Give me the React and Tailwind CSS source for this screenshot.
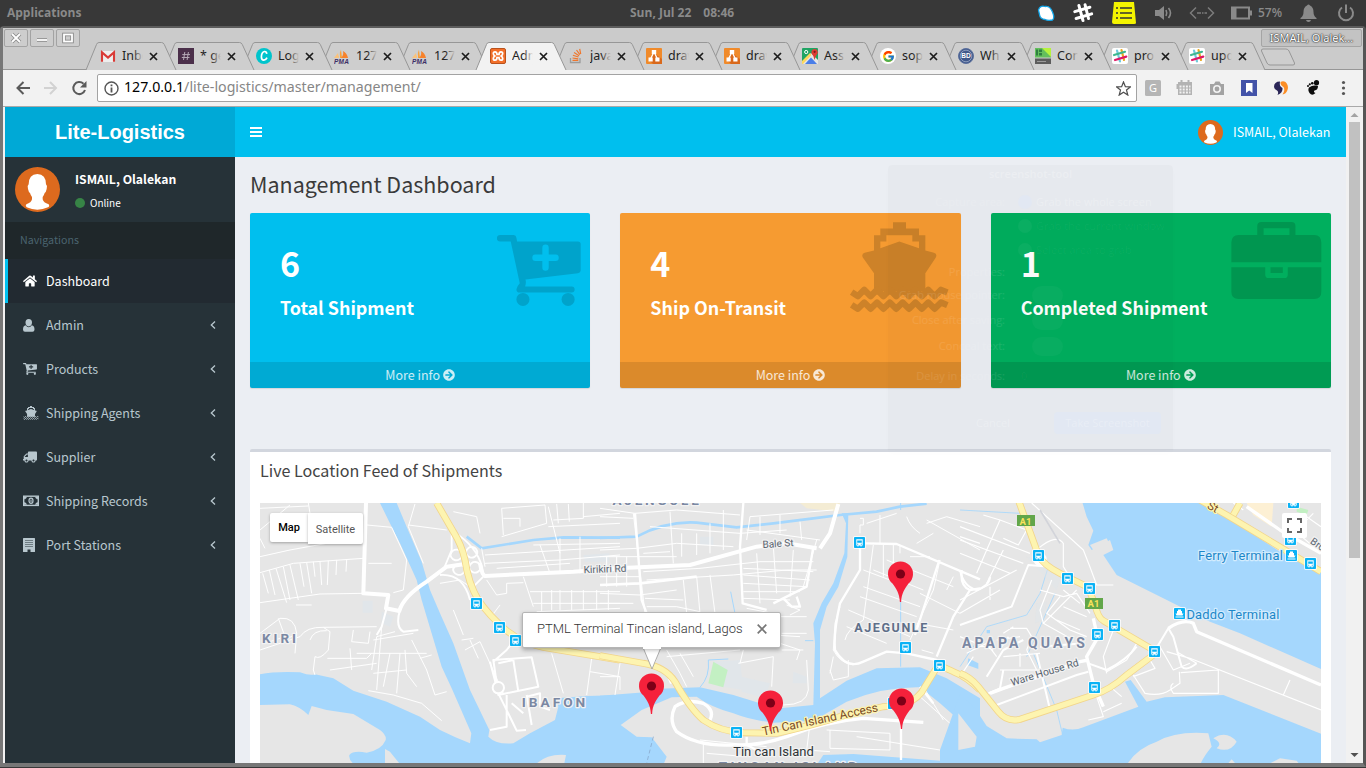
import React from "react";
import { FaTruck, FaArrowCircleRight, FaHome } from "react-icons/fa";
import { FcGoogle } from "react-icons/fc";

const Slack = ({ mono }) => (
  <svg viewBox="0 0 16 16" className="size-full">
    {!mono && <rect width="16" height="16" rx="2" fill="#fff" />}
    <g strokeWidth="2.2" strokeLinecap="round" fill="none">
      <path d="M5 2.5 L8 13.5" stroke={mono ? "#fff" : "#70cadb"} />
      <path d="M9.5 2 L12 12" stroke={mono ? "#fff" : "#e9a820"} />
      <path d="M2 7 L13 3.8" stroke={mono ? "#fff" : "#3eb890"} />
      <path d="M3 12 L14.3 8.6" stroke={mono ? "#fff" : "#e01765"} />
    </g>
  </svg>
);

const Pma = () => (
  <svg viewBox="0 0 16 16" className="size-full">
    <path d="M6 1 Q7 6 3 10 H6Z M7 2 L8 10 H4 Z" fill="#f9a13a" />
    <path d="M9 3 Q13 5 14 10 H7 Q10 7 9 3Z" fill="#f7822b" />
    <path d="M0 10 L4 5 L5 10Z" fill="#fbc27a" />
    <text x="0" y="16" fontSize="6.5" fontWeight="bold" fontStyle="italic" textLength="15" fontFamily="Liberation Sans" fill="#3d2f66">PMA</text>
  </svg>
);

const Draw = () => (
  <svg viewBox="0 0 16 16" className="size-full">
    <rect width="16" height="16" rx="1" fill="#f08a2a" />
    <path d="M8 5 L16 11 V16 H7 L4 13Z" fill="#d9691c" />
    <path d="M8 4 L4.5 11 M8 4 L11.5 11" stroke="#fff" strokeWidth="1.3" />
    <path d="M5.8 2h4.4v4H5.8z M2.5 9.5h4.2v4H2.5z M9.3 9.5h4.2v4H9.3z" fill="#fff" />
  </svg>
);

const Gmail = () => (
  <svg viewBox="0 0 16 16" className="size-full">
    <rect x="1" y="3" width="14" height="11" fill="#eee" />
    <path d="M2 13.8 V4.4 L8 9.6 L14 4.4 V13.8" fill="none" stroke="#d93a36" strokeWidth="2.1" />
  </svg>
);

const Hash = () => (
  <svg viewBox="0 0 16 16" className="size-full">
    <rect width="16" height="16" fill="#4b2f4a" />
    <path d="M6.8 4 L5.5 12 M10.4 4 L9.1 12 M4.3 6.6 H12 M3.8 9.5 H11.5" stroke="#b5a8b5" strokeWidth="1" />
  </svg>
);

const Canva = () => (
  <svg viewBox="0 0 16 16" className="size-full">
    <circle cx="8" cy="8" r="8" fill="#00c4cc" />
    <path d="M10.8 5.8 Q10.5 3.3 8.4 3.5 Q5.5 4.2 5.4 9 Q5.5 12 7.8 12.2 Q10 12 11 9.6" fill="none" stroke="#fff" strokeWidth="1.7" />
  </svg>
);

const Xampp = () => (
  <svg viewBox="0 0 16 16" className="size-full">
    <rect x=".5" y=".5" width="15" height="15" rx="1.5" fill="#f3702a" stroke="#b9521d" />
    <path d="M5 3.800 Q3.300 3.800 3.300 5.600 Q3.300 7 4.800 8 Q3.300 9 3.300 10.400 Q3.300 12.200 5 12.200 Q7 12.200 7 9.500 H9 Q9 12.200 11 12.200 Q12.700 12.200 12.700 10.400 Q12.700 9 11.200 8 Q12.700 7 12.700 5.600 Q12.700 3.800 11 3.800 Q9 3.800 9 6.500 H7 Q7 3.800 5 3.800Z" fill="none" stroke="#fff" strokeWidth="1.700" />
  </svg>
);

const Maps = () => (
  <svg viewBox="0 0 16 16" className="size-full">
    <rect width="16" height="16" rx="1" fill="#1fa463" />
    <path d="M0 14 L9 5 L16 12 V16 H0Z" fill="#e6e6e6" />
    <path d="M3 16 L9 9.5 L15 16Z" fill="#4a7ee8" />
    <path d="M0 13 L8 5 L9.5 7 L1 16 H0Z" fill="#fdd75b" />
    <circle cx="4.2" cy="4" r="1.6" fill="none" stroke="#fff" />
    <path d="M12.6 12 Q12 8 9.6 5.5 A3.2 3.4 0 1 1 15.6 5.5 Q13.2 8 12.6 12Z" fill="#de3b35" />
    <circle cx="12.6" cy="3.8" r="1.1" fill="#7d1a17" />
  </svg>
);

const Goog = () => (
  <div className="flex size-full items-center justify-center rounded-full bg-white"><FcGoogle size={13} /></div>
);

const Bd = () => (
  <svg viewBox="0 0 16 16" className="size-full">
    <circle cx="8" cy="8" r="7.5" fill="#41598b" stroke="#5a6f9d" />
    <circle cx="8" cy="8" r="5.8" fill="none" stroke="#a9b6d0" strokeWidth=".7" />
    <text x="8" y="10.4" fontSize="6.5" textAnchor="middle" fontWeight="bold" fontFamily="Liberation Sans" fill="#fff">BD</text>
  </svg>
);

const Green = () => (
  <svg viewBox="0 0 16 16" className="size-full">
    <rect width="16" height="9.5" fill="#63bf5c" />
    <path d="M7 0 H16 V9 Z" fill="#b6f23e" />
    <path d="M1 1.500 h2 v6 h-2z M4 1.500 h3 v2.500 h-3z M4 5 h3 v2.500 h-3z" fill="#2f7f41" />
    <rect y="10.5" width="16" height="5.5" fill="#5c5c5c" />
    <path d="M2 13.5 h9" stroke="#aaa" strokeWidth=".8" />
  </svg>
);

const Stack = () => (
  <svg viewBox="0 0 16 16" className="size-full" fill="none">
    <path d="M2.500 10 V14.5 H12 V10" stroke="#9b9b9b" strokeWidth="1.3" />
    <path d="M4.500 12.3 H10.3 M4.500 10 L10.3 10.8 M4.900 7.3 L10.500 9 M6.1 4.5 L11.1 7.7 M8.500 2 L11.9 6.6 M11.7 .8 L12.7 6" stroke="#f0762b" strokeWidth="1.2" />
  </svg>
);

const tabs = [
  [Gmail, "Inbo"], [Hash, "* ge"], [Canva, "Log"], [Pma, "127"], [Pma, "127"], [Xampp, "Adm"], [Stack, "java"],
  [Draw, "draw"], [Draw, "draw"], [Maps, "Ass"], [Goog, "sop"], [Bd, "Wh"], [Green, "Con"], [Slack, "pro"], [Slack, "upd"],
];

function Tab({ Icon, label, index }) {
  const active = index === 5;
  return (
    <div
      className={(index > 10 ? "w-[77px]" : "w-[78px]") + " relative flex h-7 shrink-0 items-center pl-3.5"}
      style={{ zIndex: active ? 40 : 30 - index }}
    >
      <svg className="absolute left-0 top-0 overflow-visible" width="90" height="28">
        <path
          d="M0 28 L10.5 2.5 Q11.2 .5 13 .5 H75.5 Q77.5 .5 78.3 2.5 L90 28"
          fill={active ? "#f2f2f2" : "#cecece"}
          stroke="#979797"
        />
      </svg>
      <div className="relative size-4"><Icon /></div>
      <div className="relative ml-1.5 h-5 w-[21px] overflow-hidden whitespace-nowrap text-[12.5px] leading-5 text-[#222]">
        {label}
        <div className={(active ? "to-[#f2f2f2]" : "to-[#cecece]") + " absolute inset-y-0 right-0 w-2.5 bg-linear-to-r from-transparent"} />
      </div>
      <svg className="relative ml-[6px]" width="9" height="9" viewBox="0 0 9 9">
        <path d="M1 1 L8 8 M8 1 L1 8" stroke="#1c1c1c" strokeWidth="1.7" />
      </svg>
    </div>
  );
}

function SystemBar() {
  return (
    <div className="flex h-[26px] shrink-0 items-center bg-[#383838] font-['Open_Sans',sans-serif] text-[12px] font-bold text-[#8a8a8a]">
      <div className="w-[630px] pl-[7px]">Applications</div>
      <div className="flex w-[407px] gap-3"><span>Sun, Jul 22</span><span>08:46</span></div>
      <svg width="18" height="18" viewBox="0 0 18 18"><path d="M1.5 6 Q3 1 8 2.5 Q13 1.5 15.5 8 Q18 14 15.5 16 Q11 17 8 15.5 Q3 15 2.5 10.5Z" fill="#fff" stroke="#12a5e8" strokeWidth="1.3" /></svg>
      <div className="ml-[17px] size-[22px]"><Slack mono /></div>
      <svg className="ml-[18px]" width="24" height="22" viewBox="0 0 24 22">
        <path d="M2 0 H22 L24 21 Q24 22 22 22 H2 Q0 22 0 20Z" fill="#f4f400" />
        <path d="M8 6 H20 M8 11 H20 M8 16 H20 M4 6 H6 M4 11 H6 M4 16 H6" stroke="#333" strokeWidth="1.7" />
      </svg>
      <svg className="ml-[18px]" width="20" height="18" viewBox="0 0 20 18" fill="none" stroke="#8a8a8a" strokeWidth="1.6">
        <path d="M1 6 H5 L10 2 V16 L5 12 H1Z" fill="#8a8a8a" stroke="none" />
        <path d="M12 6 Q13.500 9 12 12 M14.500 4 Q18.500 9 14.500 14" />
      </svg>
      <svg className="ml-[15px]" width="26" height="14" viewBox="0 0 26 14" fill="none" stroke="#7c7c7c" strokeWidth="1.5">
        <path d="M7 1.500 L1.500 7 L7 12.500 M19 1.500 L24.500 7 L19 12.500 M8 7 h4 M13 7 h1.500 M15.500 7 h2.500" />
      </svg>
      <svg className="ml-[16px]" width="22" height="14" viewBox="0 0 22 14">
        <path d="M1 1.5 H18 V12.5 H1Z" fill="none" stroke="#8a8a8a" strokeWidth="2" />
        <path d="M2 2 H5.500 V12 H2Z M19 4.5 h2 v5 h-2z" fill="#8a8a8a" />
      </svg>
      <span className="ml-[5px] w-[28px] font-semibold">57%</span>
      <svg className="ml-[14px]" width="17" height="18" viewBox="0 0 17 18" fill="#8a8a8a">
        <path d="M7 1.5 Q8.5 -.5 10 1.5 Q13.5 3 13.5 8 Q13.5 12 16.5 14 V15 H.5 V14 Q3.5 12 3.5 8 Q3.5 3 7 1.5Z M6 16 H11 Q10.5 18 8.5 18 Q6.500 18 6 16Z" />
      </svg>
      <svg className="ml-[20px]" width="18" height="18" viewBox="0 0 18 18" fill="none" stroke="#8a8a8a" strokeWidth="2">
        <path d="M5 3.5 A7 7 0 1 0 13 3.500 M9 .5 V9" />
      </svg>
    </div>
  );
}

const WinButton = ({ children }) => (
  <div className="flex h-[18px] w-[24px] items-center justify-center rounded-xs border border-[#a3a3a3] bg-[#cdcdcd]">
    <svg width="14" height="12" viewBox="0 0 14 12" fill="none">
      <g stroke="#8c8c8c" strokeWidth="3.600">{children}</g>
      <g stroke="#fff" strokeWidth="1.800">{children}</g>
    </svg>
  </div>
);

function TabStrip() {
  return (
    <div className="flex h-[42px] shrink-0 items-start border-b border-[#979797] bg-[#cbcbcb]">
      <div className="flex w-[83px] shrink-0 gap-[2px] pl-[1px] pt-[1px]">
        <WinButton><path d="M3 2 L11 10 M11 2 L3 10" /></WinButton>
        <WinButton><path d="M2 8 H12" /></WinButton>
        <WinButton><rect x="3" y="2.500" width="8" height="7" /></WinButton>
      </div>
      <div className="mt-[14px] flex">
        {tabs.map(([Icon, label], i) => <Tab key={i} Icon={Icon} label={label} index={i} />)}
      </div>
      <div className="relative -ml-1 flex w-[114px] shrink-0 flex-col items-end gap-[1px] pt-[1px]">
        <div className="flex h-[18px] w-[101px] items-center justify-center rounded-xs border border-[#a5a5a5] bg-[#c3c3c3] text-[11px] text-white [text-shadow:0_0_1px_#333,0_0_1px_#333,0_0_2px_#333]">
          ISMAIL, Olalek...
        </div>
        <svg className="mr-[66px]" width="36" height="18" viewBox="0 0 36 18"><path d="M1.500 3 Q1 1 3 1 H26 Q28 1 29 3 L34.500 15 Q35 17 33 17 H10 Q8 17 7 15Z" fill="#cecece" stroke="#979797" /></svg>
      </div>
    </div>
  );
}

function Toolbar() {
  return (
    <div className="flex h-[37px] shrink-0 items-center border-b border-[#a9a9a9] bg-[#f2f2f2]">
      <svg className="ml-[12px]" width="72" height="18" viewBox="0 0 72 18" fill="none" strokeWidth="2">
        <path d="M15 9 H2.500 M8.500 3 L2.500 9 L8.500 15" stroke="#5a5a5a" />
        <path d="M29 9 H41 M35 3 L41 9 L35 15" stroke="#d2d2d2" />
        <path d="M70 11 A6 6 0 1 1 68.500 4.800" stroke="#5a5a5a" />
        <path d="M71.500 2 V8.500 H65Z" fill="#5a5a5a" />
      </svg>
      <div className="ml-[10px] flex h-7 w-[1040px] items-center rounded-xs border border-[#a3a3a3] bg-white">
        <svg className="ml-[6px]" width="15" height="15" viewBox="0 0 15 15"><circle cx="7.500" cy="7.500" r="6.500" fill="none" stroke="#555" strokeWidth="1.400" /><path d="M7.500 3.500 v1.800 M7.500 6.500 v5" stroke="#555" strokeWidth="1.800" /></svg>
        <span className="ml-[5px] flex-1 -mt-0.5 text-[14.200px] text-[#868686]"><span className="text-black">127.0.0.1</span>/lite-logistics/master/management/</span>
        <svg className="mr-[5px]" width="15" height="15" viewBox="0 0 16 16"><path d="M8 1 L10 6 L15.300 6.300 L11.200 9.700 L12.600 15 L8 12 L3.400 15 L4.800 9.700 L.7 6.300 L6 6Z" fill="none" stroke="#4e4e4e" strokeWidth="1.300" /></svg>
      </div>
      <svg className="ml-[7px]" width="204" height="20" viewBox="0 0 204 20">
        <rect x="1" y="2" width="16" height="16" rx="1.500" fill="#b5b5b5" />
        <text x="9" y="14" fontSize="11" textAnchor="middle" fontFamily="Noto Sans" fill="#fff">G</text>
        <path d="M34 4 H48 V17 H34Z M32.500 6h2v5h-2z" fill="#b3b3b3" />
        <g fill="#b3b3b3"><path d="M36.500 2h2v3h-2z M43.500 2h2v3h-2z" /></g>
        <path d="M35.500 8.500 H46.500 M35.500 11.500 H46.500 M35.500 14.500 H46.500" stroke="#f2f2f2" strokeWidth="2" strokeDasharray="2 1.200" />
        <path d="M66 6 H70 L71.500 3.500 H75.500 L77 6 H80 V17 H66Z" fill="#a3a3a3" /><circle cx="73" cy="11" r="3.200" fill="#a3a3a3" stroke="#f2f2f2" strokeWidth="1.600" />
        <rect x="97" y="2" width="16" height="16" fill="#4353a8" /><path d="M102 5 H108.500 V15 L105.200 12.500 L102 15Z" fill="#fff" />
        <path d="M136 3.500 Q130 3.500 130 9 Q130.500 12 133 12.500 Q135 14 133.500 17 Q139 15 138.500 10 Q135 8.500 136 3.500Z" fill="#2b2657" />
        <path d="M136.500 4 Q139 2.500 141.500 4 Q145 7.500 143.500 12 Q142 16 138.500 16.500 Q141.500 12 139.500 9 Q136 7 136.500 4Z" fill="#fb8d25" />
        <path d="M165 9.500 Q169 6.500 174 8 Q174 12 170.500 12.500 Q169 14 171.500 15 Q168 18.500 165.500 15 Q163.500 12 165 9.500Z" fill="#0d0d0d" />
        <g fill="#0d0d0d"><ellipse cx="172.500" cy="4.700" rx="2.600" ry="2.700" /><circle cx="168.300" cy="5.200" r="1.300" /><circle cx="165.800" cy="6.300" r="1.100" /><circle cx="164" cy="8" r="1" /></g>
        <g fill="#555"><circle cx="199.500" cy="4.500" r="1.600" /><circle cx="199.500" cy="10" r="1.600" /><circle cx="199.500" cy="15.500" r="1.600" /></g>
      </svg>
    </div>
  );
}

const Avatar = ({ className }) => (
  <svg className={className} viewBox="45 186 135 135">
    <circle cx="112.500" cy="253.500" r="67.500" fill="#dd6a1e" />
    <path d="M112 207 Q138 208 138 238 Q143 242 140 252 Q138 262 134 264 Q132 271 128 276 V283 Q130 293 146 298 Q150 304 144 307 Q128 314 112 314 Q96 314 80 307 Q75 303 79 298 Q94 293 96 283 V276 Q92 271 90 264 Q86 262 84 252 Q81 242 86 238 Q86 208 112 207Z" fill="#fff" />
  </svg>
);

const CartPlus = ({ className, plus }) => (
  <svg className={className} viewBox="80 104 251 212" fill="currentColor">
    <path d="M89 104 H130 Q137 104 138 112 L140 123 H322 Q330 123 330 131 V210 Q330 217 322 218 L165 237 Q168 245 164 258 H303 a9 9 0 0 1 0 18 H148 Q138 276 138 266 Q139 258 148 248 L121 123 H89 a9.500 9.500 0 0 1 0 -19Z" />
    <circle cx="157.500" cy="296.500" r="19.500" /><circle cx="292.500" cy="296.500" r="19.500" />
    <path d="M195 172 H255 M225 142 V201" stroke={plus} strokeWidth="19" strokeLinecap="round" />
  </svg>
);

const zig = (y) => {
  let d = "M1144 " + (y - 2);
  for (let i = 0; i < 14; i++) d += " L" + (1162.500 + i * 19.200).toFixed(1) + " " + (i % 2 ? y - 9 : y + 10);
  return d + " L1431 " + (y - 1);
};

const Ship = ({ className }) => (
  <svg className={className} viewBox="1136 65 303 272" fill="currentColor">
    <path fillRule="evenodd" d="M1268 65H1307V84H1346V104H1365V150L1391 157Q1402 161 1396 172L1365 218V272H1211V218L1178 172Q1172 160 1183 157L1211 150V104H1230V84H1268Z M1230 143L1287 123L1346 143V123H1326V104H1248V123H1230Z" />
    <path d={zig(277)} fill="none" stroke="currentColor" strokeWidth="19" strokeLinejoin="round" />
    <path d={zig(315)} fill="none" stroke="currentColor" strokeWidth="19" strokeLinejoin="round" />
  </svg>
);

const Briefcase = ({ className }) => (
  <svg className={className} viewBox="812 350 272 232" fill="currentColor">
    <path fillRule="evenodd" d="M812 471V412Q812 390 834 389H890V362Q890 350 903 350H993Q1005 350 1005 362V389H1062Q1083 390 1083 412V471Z M909 369H987V389H909Z" />
    <path d="M812 486H914V508Q914 519 924 519H972Q982 519 982 508V486H1083V560Q1083 582 1062 582H834Q812 582 812 560Z M930 486h37v18h-37z" />
  </svg>
);

const User = () => (
  <svg width="12" height="13" viewBox="0 0 12 13" fill="currentColor">
    <path d="M5.700 0 Q9 0 9 3.500 Q9 7 5.700 7.500 Q2.500 7 2.500 3.500 Q2.500 0 5.700 0Z M2.700 6.200 Q4 8.200 5.700 8.200 Q7.500 8.200 8.800 6.200 Q11.500 6.700 11.500 10.500 Q11.500 12.800 9.500 12.800 H2 Q0 12.800 0 10.500 Q0 6.700 2.700 6.200Z" />
  </svg>
);

const Money = () => (
  <svg width="16" height="12" viewBox="0 0 16 12" fill="none" stroke="currentColor">
    <rect x=".7" y="1.200" width="14.600" height="9.200" strokeWidth="1.400" />
    <path d="M1 2 H3.500 Q3.500 4 1 4Z M15 2 H12.500 Q12.500 4 15 4Z M1 9.600 H3.500 Q3.500 7.600 1 7.600Z M15 9.600 H12.500 Q12.500 7.600 15 7.600Z" fill="currentColor" strokeWidth=".5" />
    <ellipse cx="8" cy="5.800" rx="2" ry="2.700" strokeWidth="1.200" /><path d="M8 4.500 V7.500" />
  </svg>
);

const Building = () => (
  <svg width="12" height="14" viewBox="0 0 12 14">
    <rect x="0" width="12" height="14" rx=".5" fill="currentColor" />
    <path d="M2.500 2.500 h7 M2.500 4.500 h7 M2.500 6.500 h7 M2.500 8.500 h7" stroke="#263238" strokeWidth="1" strokeDasharray="1 1" /><path d="M4.500 11.500h3v2.500h-3z" fill="#263238" />
  </svg>
);

const nav = [
  ["Dashboard", <FaHome size={14} />],
  ["Admin", <User />],
  ["Products", <CartPlus className="h-3 w-3.5" plus="#263238" />],
  ["Shipping Agents", <Ship className="h-3.5 w-4" />],
  ["Supplier", <FaTruck size={14} className="-scale-x-100" />],
  ["Shipping Records", <Money />],
  ["Port Stations", <Building />],
];

function Sidebar() {
  return (
    <aside className="flex w-[230px] shrink-0 flex-col bg-[#263238] text-[#b8c7ce]">
      <div className="flex h-[50px] items-center justify-center bg-[#00a9d6] font-['Liberation_Sans',sans-serif] text-[20px] font-bold text-white">Lite-Logistics</div>
      <div className="flex h-[65px] px-2.5">
        <Avatar className="mt-2.5 size-[45px]" />
        <div className="ml-[15px] pt-[12px] text-white">
          <div className="text-[12.200px] font-bold leading-5">ISMAIL, Olalekan</div>
          <div className="mt-[6px] flex items-center text-[10px] leading-4"><span className="mr-[5px] size-2.5 rounded-full bg-[#378446]" />Online</div>
        </div>
      </div>
      <div className="flex h-[37px] items-center bg-[#1f272a] pl-[15px] text-[10.700px] text-[#4b646f]">Navigations</div>
      {nav.map(([label, icon], i) => (
        <div key={label} className={(i === 0 ? "border-[#00c0ef] bg-[#222a31] text-white" : "border-transparent") + " flex h-11 items-center border-l-3 pl-[15px] pr-[18px]"}>
          <span className="flex w-[23px] items-center">{icon}</span>
          <span className="flex-1 text-[12.500px] leading-5">{label}</span>
          {i > 0 && <svg width="8" height="10" viewBox="0 0 8 10" fill="none" stroke="currentColor" strokeWidth="1.300"><path d="M6 1.500 L2.300 5 L6 8.500" /></svg>}
        </div>
      ))}
    </aside>
  );
}

function StatCard({ bg, value, title, children }) {
  return (
    <div className={bg + " relative flex h-[175px] flex-1 flex-col rounded-xs text-white shadow-[0_1px_1px_rgba(0,0,0,0.1)]"}>
      <div className="flex-1 pl-[30px] pt-[31px] font-bold">
        <div className="text-[34px] leading-[38px]">{value}</div>
        <div className="mt-[13px] text-[17.900px] leading-6">{title}</div>
      </div>
      <div className="flex h-[26px] items-center justify-center gap-[3px] rounded-b-xs bg-black/11 text-[12.500px] text-white/80">More info <FaArrowCircleRight size={12} /></div>
      {children}
    </div>
  );
}

const buses = [[476.500, 603.500], [499.500, 627.500], [515.500, 640.500], [859.500, 542.500], [905.500, 647.500], [939.500, 665.500], [736.500, 732.500], [893.500, 703.500], [1038.500, 555.500], [1067.500, 578.500], [1089.500, 588.500], [1114.500, 625.500], [1097.500, 634.500], [1154.500, 651.500], [1094.500, 687.500], [1310.500, 563.500], [1290.500, 539.500], [1293.500, 502.500]];
const ferries = [[1291.500, 555.500], [1179.500, 613.500]];
const pins = [[900.500, 602], [651.500, 714], [770.500, 731], [901.500, 729]];

const Label = (p) => (
  <text textAnchor="middle" fontFamily="Roboto, sans-serif" stroke="#f2f2f2" strokeWidth="2.500" paintOrder="stroke" strokeLinejoin="round" {...p} />
);

const yellowA = "M590 189 L640 275 Q665 315 675 360 Q685 430 715 480 Q750 530 800 572 Q850 610 910 622 L1140 660";
const yellowB = "M0 497 L130 520 Q195 530 225 575 Q270 655 310 690 Q360 725 430 728 L530 730 Q640 705 720 680 L850 650 L910 645 Q960 625 975 590 L1015 525 L1060 545 Q1100 560 1140 600";
const yellowC = "M0 550 Q30 560 55 590 L115 665 Q140 697 180 688 L400 615 Q450 600 500 555 L580 495 M175 30 L235 195 Q250 225 300 250 L385 292 L405 345 Q415 385 430 392 L580 480 M720 30 L800 75 L1083 245 M840 39 L820 75";

const Yellow = ({ d }) => (
  <g fill="none" strokeLinejoin="round">
    <path d={d} stroke="#f2d58a" strokeWidth="21" /><path d={d} stroke="#fdf4b0" strokeWidth="16" />
  </g>
);

function ShipmentMap() {
  return (
    <div className="relative h-[260px] w-full overflow-hidden bg-[#e6e6e6]">
      <svg width="1061" height="260" viewBox="260 503 1061 260" className="block">
        <g transform="translate(240 440) scale(.33333)">
          <path fill="#a5d7fd" d="M420 189H470L500 260L545 365L570 450L600 520L640 610L690 750L748 870L745 890Q770 915 820 910L870 880L945 840L955 800L950 775L1040 768L1150 765V975H50V705Q100 693 180 697Q210 708 225 703L280 715L340 752L440 785L540 830L600 870Q640 890 690 910L694 880L635 745L605 680L560 530L545 480L530 420L480 310L445 240Z" />
          <path fill="#e6e6e6" d="M50 795L150 793Q180 800 205 825L215 798L260 810L340 822L420 870Q440 885 437 900Q425 930 380 938Q340 930 328 945Q325 960 345 975H50Z M435 927L450 935Q470 960 482 975H435Z M885 975Q920 940 978 945L972 975Z" />
          <path fill="none" stroke="#a5d7fd" strokeWidth="8" d="M680 290L725 325L880 300L970 292L1140 293" />
          <path fill="#e1e6ea" d="M368 482H398V518H368Z M425 515L460 530L450 560L425 550Z M1030 345L1108 340V365H1035Z" />
          <g fill="none" stroke="#fff" strokeLinejoin="round">
            <path strokeWidth="3" d="M60 270L150 195 M60 205L205 198 M60 350L150 330L370 290 M75 325L60 295 M205 189L210 220 M60 398L160 370L370 355 M68 400L85 460 M88 390L105 465 M108 385L140 488 M130 380L150 480 M150 375L175 480 M180 370L192 440 M200 368L215 460 M220 365L225 410 M240 365L245 435 M265 362L262 435 M290 360L288 405 M320 360L318 395 M60 488L240 462L370 460 M380 255L455 262L500 360L490 450L460 458 M385 370H455 M525 192L505 260L550 370 M505 255L620 270 M60 580L120 535Q165 530 170 580L120 610 M115 535L135 590L75 610 M168 495H215 M60 630L180 590Q200 560 250 562L410 560 M250 562L270 575L265 630Q240 660 225 650L220 690L225 705 M210 600Q220 570 260 572 M340 570L335 605L385 610L390 575 M465 575L410 590L395 690 M270 690L410 670 M262 655H380L395 640 M330 625L335 690 M350 640H560 M400 600L520 580 M425 560L410 750 M450 640L430 740 M480 640L470 760 M495 630L500 700L530 740 M515 600L560 690L585 765L620 755 M400 700L500 690 M385 752L460 765L545 790L605 842 M540 655L575 645 M170 580L165 640 M600 430L660 420L690 440 M640 510L670 585 M665 600L700 595 M690 600L715 655 M675 630L720 605L750 670L790 760 M790 285L785 205L915 195L920 250L785 290 M790 235H840V260 M925 200L960 340 M950 192L955 250 M940 240L1030 235V189 M985 192L988 245 M1030 230L1140 220 M925 260L1140 250 M880 315L1140 310 M900 315L930 400 M735 345L1140 320 M735 370L960 360L1140 345 M960 295V400 M1020 290V400 M725 325L735 380 M770 385L990 370 M740 420L770 465L800 460V430L850 428 M850 410L880 500 M870 455H1140 M880 490H1140 M890 515L1140 505 M905 455V515 M935 450V510 M960 450V510 M995 450V510 M1030 450V510 M1070 450V510 M1105 450V510 M640 215L710 230L720 280 M750 535L780 495 M935 640L970 760 M1055 655L1040 765 M1050 695L1140 710" />
            <path strokeWidth="6" d="M760 660L875 652L895 740L775 765Z M820 660L835 755 M775 670L820 660 M750 665L775 760Q800 810 830 872L858 870 M800 765L800 860L750 870 M760 665L800 630L815 610 M440 505L425 560L410 585 M480 510Q465 560 490 575L535 570 M860 765L875 855 M815 790L850 820 M860 770L900 760V800L930 810" />
            <path strokeWidth="12" d="M378 189L370 460L445 465L438 505L478 513Q490 470 560 425L620 380L690 370 M720 370Q725 405 735 408L1000 395L1140 385" />
            <path strokeWidth="5.500" d="M632 338a17 17 0 1 0 34 10a17 17 0 1 0 -34 -4 M678 330a17 17 0 1 0 34 10a17 17 0 1 0 -34 -4 M640 382a17 17 0 1 0 34 10a17 17 0 1 0 -34 -4 M688 375a17 17 0 1 0 34 10a17 17 0 1 0 -34 -4 M635 280V330L610 390 M655 285Q720 330 730 400 M600 405Q670 400 690 480 M700 440L730 410" />
          </g>
          <circle cx="775" cy="743" r="17" fill="#e6e6e6" stroke="#fff" strokeWidth="6" />
          <Yellow d={yellowA} />
        </g>
        <g transform="translate(600 490) scale(.33333)">
          <path fill="#a5d7fd" d="M0 617L155 605L180 596L300 592L400 615L480 640L540 655L640 645L645 460L640 400L665 340L700 280L733 190L738 100L725 70H745L742 200L715 290L680 350L660 420V625L740 572L830 535L960 532L1040 565L1140 625V830H0Z" />
          <path fill="#e6e6e6" d="M62 705L125 660L215 622L290 620Q330 650 400 670Q450 690 520 698L640 692L740 635Q850 590 960 592L1020 640L1100 710L1130 745V768L1080 775L1060 815L760 792L670 795L650 825H190L200 800L155 742L110 740Z" />
          <path fill="none" stroke="#a5d7fd" strokeWidth="8" d="M0 144L110 140Q200 92 290 98L410 112L520 100L640 85L720 75L830 65L900 50L980 41" />
          <path fill="none" stroke="#a5d7fd" strokeWidth="3" d="M902 39V60 M902 330V530 M392 305L405 370 M300 592Q330 560 325 510L385 507 M615 452H640" />
          <path fill="#e1e6ea" d="M340 515L420 510L430 600L370 590Z M425 560L510 580L495 625L425 605Z M580 545L620 560V580H578Z M300 140H340V165H300Z" />
          <path fill="#c3f0c3" d="M340 515L383 540L370 592L325 580Z" />
          <path fill="#fdf0c8" d="M600 39L720 39L715 65L620 55Z" opacity=".6" />
          <g fill="none" stroke="#fff" strokeLinejoin="round">
            <path strokeWidth="3" d="M0 55L105 70L230 60L420 75 M0 80L100 85 M100 70L135 370 M0 180L110 175L230 160L400 170 M130 190L210 185 M150 110L420 130L560 120 M0 200H230 M210 65L220 220 M245 130V200 M290 130V195 M330 100V190 M370 60V180 M0 310L120 315L230 300 M20 200V290 M50 200V290 M80 200V290 M0 260H120 M130 245L300 235L480 215L640 215 M140 270L400 255L560 240L650 240 M135 325L250 330 M140 350H230L300 365 M430 235L640 245 M430 255L630 270 M430 280L620 290 M430 305H600 M430 325L570 330 M470 190L480 340 M520 170L530 310 M580 180L570 320 M440 150L450 80L700 60 M480 80V135 M540 75V130 M600 95L605 150 M250 270L260 370 M290 260L300 370 M330 255L345 370 M440 120L660 150 M440 355L520 370 M560 345L600 360L570 375 M650 150L610 290 M530 380H620 M545 430H620 M540 460L600 480L590 510 M440 430L600 440 M545 480H610 M200 480L240 550L260 590 M240 490L280 560 M200 500L420 480 M180 460L165 520 M430 480L420 520 M415 520L520 500L515 590 M620 510L625 600Q620 645 550 645 M0 560H60V600 M60 520L45 615 M780 85H790V105H780V130 M800 100L890 70 M840 75V160 M820 165L790 390Q740 420 735 450 M850 165V260 M820 240L970 300 M790 290L960 350 M780 320L950 380 M745 360L930 440 M740 410L860 460 M790 240L870 270 M880 165V235 M900 165V190 M930 200H990 M860 210L1060 290 M950 160L1000 130 M980 90L1140 180 M920 80Q930 110 960 130 M980 100L1040 80L1140 110 M1020 210L1000 300L930 450 M1060 260L1040 300 M960 310L1080 370 M950 400L1060 420 M720 350L705 400L700 480Q720 520 760 525 M690 540L700 570L745 560V510 M700 500L690 550 M965 480L1000 490 M630 700L620 780L690 785 M690 720V775L870 780V730L680 720 M770 740L1020 780 M0 340H100 M310 760V820 M320 790L440 800 M300 750L500 770 M970 590L1030 690 M960 620L1140 780" />
            <path strokeWidth="7" d="M795 160L890 162L1140 268 M1085 240Q1080 290 1110 300L1140 295 M1018 210L945 435 M1110 300L1060 380L1010 500 M780 175V240L720 340Q700 430 705 480Q740 540 790 515L860 485L920 490L1010 510 M105 70L125 330L140 370 M430 39L420 170L428 340L500 360 M640 170L620 290L560 320L520 340 M550 325L575 350H600L590 320" />
            <path strokeWidth="12" d="M0 237L270 225L470 170L560 160L650 175 M715 42L690 130L660 175" />
            <path strokeWidth="8" d="M0 285L120 280L290 260" />
            <path strokeWidth="10" d="M155 525L200 545L215 580 M330 690Q345 660 310 640Q260 625 225 650Q205 690 230 725Q290 770 400 765Q480 768 560 740Q670 695 790 685L970 697" />
            <path strokeWidth="7" d="M903 660V810 M960 590L1000 640 M440 740V765L470 780" />
          </g>
          <path d="M160 740L140 820" stroke="#8fb2d6" strokeWidth="3" strokeDasharray="12 8" fill="none" />
          <Yellow d={yellowB} />
        </g>
        <g transform="translate(960 490) scale(.33333)">
          <path fill="#a5d7fd" d="M365 30L380 80L400 122L385 165L395 180L450 150L460 180L430 195L470 255L640 340L750 395L840 430L1090 540V250L960 185L720 30Z M0 612L45 655L80 708L140 745L230 748L240 757L305 735L308 713Q340 725 370 712L535 650L495 575L512 570L560 635L615 622L790 615L1090 734V830H-60V780Z" />
          <path fill="#e6e6e6" d="M-5 670L50 740L45 770L-5 780Z M500 825Q530 775 590 755Q650 722 745 730L755 770Q730 800 720 825Z M390 165L440 145L450 165L400 180Z M760 745Q800 720 830 755Q810 790 770 775Q790 760 760 745Z M920 825L960 805L1010 812L1020 825Z M800 825L815 808L830 825Z" />
          <path fill="#fdf0d4" d="M860 39H940L935 110L880 75Z" /><path fill="#c3f0c3" d="M1010 50L1045 60L1040 75L1010 65Z" />
          <path fill="#a5d7fd" d="M25 505L55 520V537L22 525Z M80 420h10v10h-10z" />
          <path fill="none" stroke="#a5d7fd" strokeWidth="2.500" d="M0 60L180 70 M262 240L240 310L200 375L80 410L0 530 M220 490L290 660L308 735 M285 310L200 500" />
          <path fill="#e0e5e9" d="M230 340L260 335L250 390L225 400Z M200 200L310 240L290 300Z" opacity=".5" />
          <g fill="none" stroke="#fff" strokeLinejoin="round">
            <path strokeWidth="3.500" d="M0 110L210 190 M0 150L190 220 M0 190L150 250 M70 75L120 90L80 180L50 250 M120 90L200 120L175 165L130 145 M0 330L170 240 M0 370L120 300 M90 290V330 M130 180L80 280 M0 140L60 160 M235 175Q290 130 310 160V230L330 262 M215 39L370 180Q390 230 410 285L460 285 M240 300L310 320L350 310L390 370 M275 270L240 360L250 400L350 300 M300 320L260 370L330 420L380 440 M310 350L380 380 M290 390L360 420 M250 400L340 450 M310 300L360 340 M150 415H200L215 440L200 480 M130 430L160 410 M145 440L120 480 M0 440L100 480 M20 490L80 460L110 500 M0 560L40 500 M130 500L240 490 M120 540H240 M110 450L180 440 M180 490V530 M200 480L230 540 M250 560L120 600 M530 460L500 510L440 545 M460 420L430 500L440 550 M570 510L585 535L520 560 M600 470L640 540L690 520 M410 620L430 680L385 690 M430 665L485 640 M450 590L485 620 M520 555L555 610Q600 620 630 600L660 580L658 545 M662 548L775 540V610H640Q625 590 640 580 M620 485L690 505L1083 660 M650 485L710 520 M990 570L970 615 M820 39L850 60 M980 100L1083 190 M1000 130L1060 70 M1040 80L1083 110" />
            <path strokeWidth="6" d="M0 240Q10 290 50 300Q90 285 90 260 M0 405L155 350L205 225L270 230 M80 560L130 480L190 450 M240 470L370 460 M85 610L120 595L130 540 M110 645L350 555L385 545 M230 490L268 650 M385 520L440 540Q500 510 530 470 M580 490L625 415L640 440L665 530Q680 545 710 520" />
            <path strokeWidth="10" d="M625 415Q670 385 700 400L710 425L1083 585 M415 440L380 500L400 580L430 650 M90 610L130 595L360 515L385 510 M400 385L410 430 M860 50L960 120L1083 190" />
          </g>
          <circle cx="240" cy="208" r="20" fill="#fff" />
          <path d="M240 60L300 160" stroke="#d2d4da" strokeWidth="5" />
          <Yellow d={yellowC} />
          <path fill="#62a64a" d="M171 75h54v33h-54z M375 324h54v33h-54z" />
        </g>
        {buses.map(([x, y], i) => (
          <g key={i} transform={"translate(" + x + " " + y + ")"}>
            <rect x="-6.200" y="-6.200" width="12.400" height="12.400" rx="1" fill="#fff" /><rect x="-5.500" y="-5.500" width="11" height="11" rx=".8" fill="#0ab2f5" />
            <path d="M-3.200 -3.300H3.200V3H2V4H1V3H-1V4H-2V3H-3.200Z" fill="#fff" /><path d="M-2.300 -2H2.300V.3H-2.300Z M-2.300 1.300h1v1h-1z M1.300 1.300h1v1h-1z" fill="#0ab2f5" />
          </g>
        ))}
        {ferries.map(([x, y], i) => (
          <g key={i} transform={"translate(" + x + " " + y + ")"}>
            <rect x="-6.200" y="-6.200" width="12.400" height="12.400" rx="1" fill="#fff" /><rect x="-5.500" y="-5.500" width="11" height="11" rx=".8" fill="#0ab2f5" />
            <path d="M-1.500 -4H1.500V-2.500H2.500V0H4L3 2H-3L-4 0H-2.500V-2.500H-1.500Z M-4 3H4V4H-4Z" fill="#fff" />
          </g>
        ))}
        <g fontWeight="700" fontSize="9.500" fill="#fbe25a" textAnchor="middle" fontFamily="Roboto"><text x="1025.500" y="524.500">A1</text><text x="1093.500" y="607.300">A1</text></g>
        <Label x="657" y="505" fontSize="13.500" fontWeight="700" letterSpacing="2.800" fill="#7b88a3">AJENGULE</Label>
        <Label x="280.500" y="643" fontSize="13.500" fontWeight="700" letterSpacing="3" fill="#7b88a3">KIRI</Label>
        <Label x="555" y="707" fontSize="13.700" fontWeight="700" letterSpacing="3" fill="#7b88a3">IBAFON</Label>
        <Label x="891.500" y="631.500" fontSize="12.500" fontWeight="700" letterSpacing="1.600" fill="#5f6f89">AJEGUNLE</Label>
        <Label x="1025" y="648" fontSize="14" fontWeight="700" letterSpacing="3.100" fill="#7b88a3">APAPA QUAYS</Label>
        <Label x="789.500" y="770.500" fontSize="13.500" fontWeight="700" letterSpacing="3.200" fill="#7b88a3">TINCAN ISLAND</Label>
        <Label x="605" y="572.500" fontSize="10.200" fill="#58636f" transform="rotate(-2 604 569)">Kirikiri Rd</Label>
        <Label x="778" y="547" fontSize="10" fill="#58636f" transform="rotate(-4 778 544)">Bale St</Label>
        <Label x="1044.500" y="676" fontSize="10.300" fill="#58636f" transform="rotate(-17 1044.500 672)">Ware House Rd</Label>
        <Label x="820" y="723.500" fontSize="12" fill="#7a4a26" stroke="#fdf4b0" transform="rotate(-12 820 719)">Tin Can Island Access</Label>
        <Label x="773.500" y="755.500" fontSize="13" fill="#2f3436">Tin can Island</Label>
        <Label x="1240.500" y="559.500" fontSize="12.900" letterSpacing=".25" fill="#1c87c9" stroke="#d3ecfd">Ferry Terminal</Label>
        <Label x="1233" y="618.500" fontSize="12.900" letterSpacing=".2" fill="#1c87c9" stroke="#d3ecfd">Daddo Terminal</Label>
        <Label x="1213" y="511" fontSize="11.500" fill="#7a4a26" stroke="#fdf4b0" transform="rotate(28 1213 507)">St</Label>
        <Label x="1320" y="546" fontSize="10" fill="#58636f" transform="rotate(35 1316 540)">Bro</Label>
        {pins.map(([x, y], i) => (
          <g key={i} transform={"translate(" + x + " " + y + ")"}>
            <path d="M-.6 0 C-1.200 -9 -4 -13 -8 -18.500 A12.500 12.500 0 1 1 8 -18.500 C4 -13 1.200 -9 .6 0Z" fill="#f5213b" /><circle cy="-28" r="4.600" fill="#7d0017" />
          </g>
        ))}
        <path d="M642 645 L652 669 L662 645Z" fill="#fff" stroke="#999" strokeWidth=".8" />
      </svg>
      <div className="absolute left-[262px] top-[109px] flex h-[36px] w-[259px] items-center rounded-xs border border-[#b5b5b5] bg-white pl-[14px] font-['Roboto',sans-serif] text-[13px] font-light text-[#333] shadow-[0_2px_4px_rgba(0,0,0,0.3)]">
        <span className="w-[220px] pb-[3px]">PTML Terminal Tincan island, Lagos</span>
        <svg width="10" height="10" viewBox="0 0 10 10" className="-mt-0.5"><path d="M.7 .7 L9.300 9.300 M9.300 .7 L.7 9.300" stroke="#777" strokeWidth="1.700" /></svg>
      </div>
      <div className="absolute left-[383px] top-[143px] h-[3px] w-[18px] bg-white" />
      <div className="absolute left-[10px] top-[10px] flex items-start font-['Roboto',sans-serif] text-[11px] leading-[29px]">
        <div className="h-[29px] w-[38px] rounded-l-xs bg-white text-center font-medium text-black shadow-[0_1px_3px_rgba(0,0,0,0.3)]">Map</div>
        <div className="h-[31px] w-[55px] rounded-r-xs bg-white pt-px text-center leading-[31px] text-[#565656] shadow-[0_1px_3px_rgba(0,0,0,0.3)]">Satellite</div>
      </div>
      <div className="absolute left-[1022px] top-[10px] flex size-[25px] items-center justify-center rounded-xs bg-white">
        <svg width="15" height="15" viewBox="0 0 15 15" fill="none" stroke="#666" strokeWidth="2"><path d="M1 5V1H5 M10 1H14V5 M14 10V14H10 M5 14H1V10" /></svg>
      </div>
    </div>
  );
}

const settings = [
  ["Capture area:", "Grab the whole screen", "h-6"], ["", "Grab the current window", "h-6"], ["", "Select area to grab", "h-[23px]"],
  ["Properties:", "", "h-[22px]"], ["Grab mouse pointer:", null, "h-6"], ["Close after saving:", null, "h-[26px]"],
  ["Conceal text:", null, "h-[26px]"], ["Delay in seconds:", "0", "h-[34px]"],
];

function GhostDialog() {
  return (
    <div className="pointer-events-none absolute left-[888px] top-[165px] flex h-[285px] w-[285px] flex-col rounded-t-sm bg-black/2 font-['Open_Sans',sans-serif] text-[11px] text-white/10 shadow-[0_3px_10px_rgba(0,0,0,0.012)]">
      <div className="h-[25px] pt-[2px] text-center text-[11px] leading-[14px] font-semibold text-white/25">screenshot-tool</div>
      {settings.map(([a, b, h], i) => (
        <div key={i} className={h + " flex shrink-0 items-center leading-4"}>
          <span className="w-[117px] text-right">{a}</span>
          {b === null ? <span className="ml-[27px] h-[19px] w-[31px] rounded-full bg-white/3" /> : <>
            {i < 3 && <span className={(i === 0 ? "bg-[#d9e9ff]/30" : "bg-white/4") + " ml-[13px] size-[14px] rounded-full"} />}
            <span className={(i < 3 ? "ml-1" : "ml-4") + (i === 0 ? " text-white/25" : " text-white/4")}>{b}</span></>}
        </div>
      ))}
      <div className="mt-[19px] flex h-[22px] items-center text-white/25">
        <span className="ml-[88px] w-[78px]">Cancel</span>
        <span className="flex h-[22px] w-[107px] items-center justify-center rounded-sm bg-[#d9e9ff]/30">Take Screenshot</span>
      </div>
    </div>
  );
}

export default function App() {
  return (
    <div className="relative flex h-[768px] w-[1366px] flex-col overflow-hidden bg-[#383838] font-['Noto_Sans',sans-serif]">
      <SystemBar />
      <div className="flex h-[741px] flex-col rounded-t-sm border-x-3 border-b-4 border-t-2 border-[#a9a9a9] border-b-[#777] border-l-[#777] border-r-[#555] border-t-[#5c5c5c] bg-[#f2f2f2]">
        <TabStrip />
        <Toolbar />
        <div className="ml-[2px] flex h-[656px] w-[1357px] overflow-hidden font-['Noto_Sans_CJK_SC',sans-serif]">
          <Sidebar />
          <div className="flex w-[1111px] shrink-0 flex-col bg-[#ebeef3]">
            <header className="flex h-[50px] shrink-0 items-center bg-[#00bfee] px-[15px] text-white">
              <svg width="12" height="10" viewBox="0 0 12 10"><path d="M0 1H12 M0 5H12 M0 9H12" stroke="#fff" strokeWidth="2" /></svg>
              <Avatar className="ml-auto size-[25px]" />
              <span className="ml-2.5 w-[98px] text-[12.500px] whitespace-nowrap">ISMAIL, Olalekan</span>
            </header>
            <main className="flex flex-col px-[15px]">
              <h1 className="h-14 pt-[12px] text-[21.500px] leading-[30px] text-[#3a3a3a]">Management Dashboard</h1>
              <div className="flex gap-[30px]">
                <StatCard bg="bg-[#00bfee]" value="6" title="Total Shipment"><CartPlus className="absolute right-[9px] top-[22px] h-[71px] w-[84px] text-[#00a3cb]" plus="#00bfee" /></StatCard>
                <StatCard bg="bg-[#f69b31]" value="4" title="Ship On-Transit"><Ship className="absolute right-[11px] top-[9px] h-[91px] w-[101px] text-[#cd8229]" /></StatCard>
                <StatCard bg="bg-[#00af5e]" value="1" title="Completed Shipment"><Briefcase className="absolute right-[9px] top-[9px] h-[77px] w-[91px] text-[#009650]" /></StatCard>
              </div>
              <section className="mt-[61px] h-[330px] rounded-t-xs border-t-3 border-[#d2d6de] bg-white px-2.5">
                <h2 className="h-[51px] pt-[6px] text-[16.100px] leading-6 text-[#444]">Live Location Feed of Shipments</h2>
                <ShipmentMap />
              </section>
            </main>
          </div>
          <div className="flex w-[16px] shrink-0 flex-col items-center bg-[#f1f1f1]">
            <svg width="13" height="15" viewBox="0 0 13 15"><path d="M2.500 10 L6.500 6 L10.500 10Z" fill="#a3a3a3" /></svg>
            <div className="h-[436px] w-[11px] bg-[#c1c1c1]" />
            <svg className="mt-auto" width="13" height="16" viewBox="0 0 13 16"><path d="M2.500 6 L6.500 10 L10.500 6Z" fill="#505050" /></svg>
          </div>
        </div>
      </div>
      <GhostDialog />
    </div>
  );
}
